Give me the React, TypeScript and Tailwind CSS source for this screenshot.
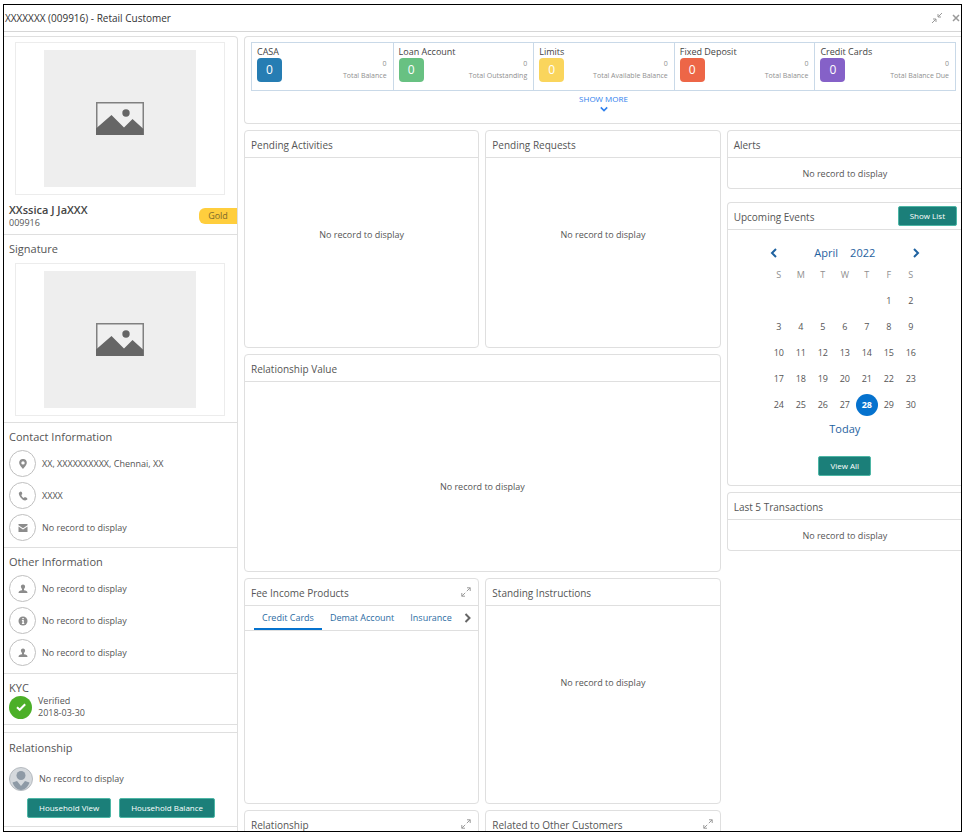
import { useState, type ReactNode } from 'react';

const products = [
  { label: 'CASA', caption: 'Total Balance', color: 'bg-[#267db3]' },
  { label: 'Loan Account', caption: 'Total Outstanding', color: 'bg-[#68c182]' },
  { label: 'Limits', caption: 'Total Available Balance', color: 'bg-[#fad55c]' },
  { label: 'Fixed Deposit', caption: 'Total Balance', color: 'bg-[#ed6647]' },
  { label: 'Credit Cards', caption: 'Total Balance Due', color: 'bg-[#8561c8]' },
];

const weeks = [
  [null, null, null, null, null, 1, 2],
  [3, 4, 5, 6, 7, 8, 9],
  [10, 11, 12, 13, 14, 15, 16],
  [17, 18, 19, 20, 21, 22, 23],
  [24, 25, 26, 27, 28, 29, 30],
];

const feeTabs = ['Credit Cards', 'Demat Account', 'Insurance'];

const PinIcon = () => (
  <svg className="w-3 h-3" viewBox="0 0 12 12" fill="#8c8c8c">
    <path fillRule="evenodd" d="M6 1a3.8 3.8 0 0 0-3.8 3.8C2.2 7.2 6 11 6 11s3.8-3.8 3.8-6.200A3.8 3.8 0 0 0 6 1zm0 2.200a1.700 1.700 0 1 1 0 3.400 1.700 1.700 0 0 1 0-3.400z" />
  </svg>
);

const PhoneIcon = () => (
  <svg className="w-3 h-3" viewBox="0 0 12 12" fill="#8c8c8c">
    <path d="M3.5 1.5 1.9 2.7c-.6 2 2.5 7.2 6.3 7.9l2.2-1-.3-1.500-2.200-1-1.200.9C5.500 7.400 4.500 6 4.300 5l1-.9-.5-2.200z" />
  </svg>
);

const MailIcon = () => (
  <svg className="w-3 h-3" viewBox="0 0 12 12" fill="#8c8c8c">
    <path d="M1.5 2h9v1.200L6 6.300 1.500 3.200z" />
    <path d="M1.5 4.400 6 7.500l4.500-3.100V10h-9z" />
  </svg>
);

const PersonIcon = () => (
  <svg className="w-3 h-3" viewBox="0 0 12 12" fill="#8c8c8c">
    <path d="M6 1.500c-1.500 0-2.200 1-2.100 2.300.1 1 .6 1.700 1.100 2.200v1.300C3 7.700 1.500 8.300 1.500 10h9c0-1.700-1.500-2.300-3.500-2.700V6c.5-.5 1-1.200 1.100-2.200C8.200 2.500 7.500 1.500 6 1.500z" />
  </svg>
);

const InfoIcon = () => (
  <svg className="w-3 h-3" viewBox="0 0 12 12">
    <circle cx="6" cy="6" r="4.5" fill="#8c8c8c" />
    <path d="M5.300 2.900h1.500v1.300H5.300zM4.900 5h1.900v3.100h.5v.9H4.900v-.9h.5V5.900h-.5z" fill="#fff" />
  </svg>
);

const ExpandIcon = () => (
  <svg className="w-2.5 h-2.5" viewBox="0 0 10 10" fill="none" stroke="#9a9a9a">
    <path d="M6 .8h3.200V4M9.200.8 5.800 4.200M4 9.200H.8V6M.8 9.200l3.400-3.400" />
  </svg>
);

const CollapseIcon = () => (
  <svg className="w-3 h-3" viewBox="0 0 12 12" fill="none" stroke="#999">
    <path d="M7 2v3h3M7 5l4-4M2 7h3v3M5 7l-4 4" />
  </svg>
);

const Chevron = ({ className, d }: { className: string; d: string }) => (
  <svg className={className} viewBox="0 0 10 10" fill="none" stroke="currentColor" strokeWidth="2">
    <path d={d} />
  </svg>
);

const Placeholder = ({ label }: { label: string }) => (
  <div className="ml-[11px] mr-3 py-[7px] border border-[#ececec] flex justify-center">
    <div className="w-[152px] h-[137px] bg-[#eee] flex items-center justify-center">
      <svg role="img" aria-label={label} className="w-12 h-[33px]" viewBox="0 0 48 33">
        <rect x="0.75" y="0.75" width="46.5" height="31.5" fill="#f0f0f0" stroke="#808080" strokeWidth="1.5" />
        <path d="M0 26.5 15.5 13 28 25.5 36.5 17 47.5 27V33H0z" fill="#666" />
        <circle cx="30" cy="11" r="3.7" fill="#666" />
      </svg>
    </div>
  </div>
);

const TealButton = ({ children }: { children: ReactNode }) => (
  <button className="h-5 px-[11px] rounded-xs border border-[#4db6a5] bg-[#1b7f79] text-white text-[8px] leading-3 whitespace-nowrap">
    {children}
  </button>
);

const InfoRow = ({ icon, text }: { icon: ReactNode; text: string }) => (
  <li className="flex items-center gap-1.5">
    <span className="w-[27px] h-[27px] shrink-0 rounded-full border border-[#bfbfbf] flex items-center justify-center">
      {icon}
    </span>
    <span>{text}</span>
  </li>
);

type CardProps = {
  title: string;
  action?: ReactNode;
  className?: string;
  children?: ReactNode;
};

const Card = ({ title, action, className = 'rounded-sm border', children }: CardProps) => (
  <section className={`flex flex-col border-[#dfdfdf] ${className}`}>
    <div className="h-[27px] shrink-0 pl-1.5 pr-[5px] border-b border-[#dfdfdf] flex items-center justify-between">
      <h2 className="pt-0.5 text-[10px] leading-[14px]">{title}</h2>
      {action}
    </div>
    {children}
  </section>
);

const Empty = ({ className = 'grow pt-0.5' }: { className?: string }) => (
  <p className={`flex items-center justify-center ${className}`}>No record to display</p>
);

const ExpandButton = ({ label }: { label: string }) => (
  <button aria-label={label} className="px-0.5">
    <ExpandIcon />
  </button>
);

const App = () => {
  const [feeTab, setFeeTab] = useState('Credit Cards');
  const [selectedDay, setSelectedDay] = useState(28);

  return (
    <div className="h-screen pt-1 px-[3px] pb-[3px] bg-white font-['Open_Sans','Noto_Sans',sans-serif] text-[9px] leading-3 text-[#555]">
      <div className="h-full border border-black overflow-hidden flex flex-col">
        {/* Title bar */}
        <header className="h-[27px] shrink-0 pl-px border-b border-[#d6d6d6] flex items-center justify-between">
          <h1 className="text-[10px] leading-[14px] text-[#333]">XXXXXXX (009916) - Retail Customer</h1>
          <div className="flex items-center gap-2">
            <button aria-label="Collapse"><CollapseIcon /></button>
            <button aria-label="Close">
              <svg className="w-2.5 h-2.5" viewBox="0 0 10 10" stroke="#999" strokeWidth="1.5">
                <path d="M2 2l6 6M8 2 2 8" />
              </svg>
            </button>
          </div>
        </header>

        <div className="grow min-h-0 pt-1 flex gap-1.5">
          {/* Customer panel */}
          <aside className="w-[234px] shrink-0 border-t border-r border-[#dfdfdf] rounded-tr-sm">
            <section className="pt-[5px] pb-[5px] border-b border-[#dfdfdf]">
              <Placeholder label="Customer photo" />
              <div className="pt-2 pl-[5px] flex items-center justify-between">
                <div>
                  <p className="text-[11px] leading-[14px] font-semibold text-[#444]">XXssica J JaXXX</p>
                  <p>009916</p>
                </div>
                <span className="w-[38px] h-4 rounded-l-md bg-[#ffce3d] text-[#7d6a2c] flex items-center justify-center">
                  Gold
                </span>
              </div>
            </section>

            <section className="pt-[7px] pb-1.5 border-b border-[#dfdfdf]">
              <h2 className="pl-[5px] mb-[7px] text-[11px] leading-[14px]">Signature</h2>
              <Placeholder label="Signature" />
            </section>

            <section className="pt-[7px] pb-1.5 px-[5px] border-b border-[#dfdfdf]">
              <h2 className="mb-1.5 text-[11px] leading-[14px]">Contact Information</h2>
              <ul className="flex flex-col gap-[5px]">
                <InfoRow icon={<PinIcon />} text="XX, XXXXXXXXXX, Chennai, XX" />
                <InfoRow icon={<PhoneIcon />} text="XXXX" />
                <InfoRow icon={<MailIcon />} text="No record to display" />
              </ul>
            </section>

            <section className="pt-[7px] pb-[7px] px-[5px] border-b border-[#dfdfdf]">
              <h2 className="mb-1.5 text-[11px] leading-[14px]">Other Information</h2>
              <ul className="flex flex-col gap-[5px]">
                <InfoRow icon={<PersonIcon />} text="No record to display" />
                <InfoRow icon={<InfoIcon />} text="No record to display" />
                <InfoRow icon={<PersonIcon />} text="No record to display" />
              </ul>
            </section>

            <section className="pt-[7px] pb-[5px] px-[5px] border-b border-[#dfdfdf]">
              <h2 className="text-[11px] leading-[14px]">KYC</h2>
              <div className="flex items-center gap-1.5">
                <span className="w-[23px] h-[23px] rounded-full bg-[#4caf28] flex items-center justify-center">
                  <svg className="w-3 h-3" viewBox="0 0 12 12" fill="none" stroke="#fff" strokeWidth="2">
                    <path d="M2 6.200 4.700 8.800 10.200 3.200" />
                  </svg>
                </span>
                <div>
                  <p>Verified</p>
                  <p>2018-03-30</p>
                </div>
              </div>
            </section>

            <section className="mt-[7px] pt-2 pb-2 px-[5px] border-y border-[#dfdfdf]">
              <h2 className="mb-3 text-[11px] leading-[14px]">Relationship</h2>
              <div className="mb-[7px] flex items-center gap-1.5">
                <svg className="w-6 h-6" viewBox="0 0 24 24">
                  <circle cx="12" cy="12" r="11.5" fill="#d5d9dd" stroke="#b5babf" />
                  <circle cx="12" cy="8.5" r="4.5" fill="#8e9aa6" />
                  <path d="M3.500 15.500 8 14l4 5 4-5 4.500 1.500c-1 3-4 7.500-8.500 7.500s-7.500-4.500-8.500-7.500z" fill="#8e9aa6" />
                </svg>
                <span>No record to display</span>
              </div>
              <div className="pl-[18px] flex gap-2">
                <TealButton>Household View</TealButton>
                <TealButton>Household Balance</TealButton>
              </div>
            </section>
          </aside>

          {/* Dashboard */}
          <main className="grow min-w-0 -mr-px flex flex-col gap-1.5">
            <section className="h-[88px] shrink-0 pt-[5px] px-1.5 border border-r-0 border-[#dfdfdf] rounded-l-sm">
              <ul className="grid grid-cols-5 border border-[#c9d9e8]">
                {products.map((p, i) => (
                  <li
                    key={p.label}
                    className={`h-[47px] pt-[3px] pl-[5px] pr-1.5 ${i > 0 ? 'border-l border-[#c9d9e8]' : ''}`}
                  >
                    <p className="text-[#444]">{p.label}</p>
                    <div className="flex items-center justify-between">
                      <span className={`w-[25px] h-6 rounded-sm ${p.color} text-white text-xs flex items-center justify-center`}>
                        0
                      </span>
                      <div className="text-right text-[7px] leading-3 text-[#8f8f8f]">
                        <p>0</p>
                        <p>{p.caption}</p>
                      </div>
                    </div>
                  </li>
                ))}
              </ul>
              <button className="mx-auto pt-0.5 flex flex-col items-center text-[8px] leading-3 text-[#2f80ed]">
                SHOW MORE
                <Chevron className="w-2 h-2" d="M1 3l4 4 4-4" />
              </button>
            </section>

            <div className="grid grid-cols-3 items-start gap-1.5">
              <div className="col-span-2 grid grid-cols-2 gap-1.5">
                <Card title="Pending Activities" className="h-[218px] rounded-sm border">
                  <Empty className="h-[154px]" />
                </Card>
                <Card title="Pending Requests" className="h-[218px] rounded-sm border">
                  <Empty className="h-[154px]" />
                </Card>
                <Card title="Relationship Value" className="col-span-2 h-[218px] rounded-sm border">
                  <Empty className="grow pt-5" />
                </Card>
                <Card
                  title="Fee Income Products"
                  action={<ExpandButton label="Expand fee income products" />}
                  className="h-[226px] rounded-sm border"
                >
                  <div className="h-[25px] pl-[9px] pr-[5px] border-b border-[#dfdfdf] flex justify-between">
                    <div role="tablist" className="flex">
                      {feeTabs.map((tab) => (
                        <button
                          key={tab}
                          role="tab"
                          aria-selected={feeTab === tab}
                          onClick={() => setFeeTab(tab)}
                          className={`px-2 pt-0.5 whitespace-nowrap border-b-2 text-[#2b6ca3] ${
                            feeTab === tab ? 'border-[#0572ce]' : 'border-transparent'
                          }`}
                        >
                          {tab}
                        </button>
                      ))}
                    </div>
                    <button aria-label="Next tabs" className="text-[#666]">
                      <Chevron className="w-2.5 h-2.5" d="M2.5 1l4 4-4 4" />
                    </button>
                  </div>
                </Card>
                <Card title="Standing Instructions" className="h-[226px] rounded-sm border">
                  <Empty className="h-[154px]" />
                </Card>
                <Card title="Relationship" action={<ExpandButton label="Expand relationship" />} />
                <Card title="Related to Other Customers" action={<ExpandButton label="Expand related customers" />} />
              </div>

              <div className="flex flex-col gap-1.5">
                <Card title="Alerts" className="h-[59px] mb-[7px] rounded-l-sm border border-r-0">
                  <Empty />
                </Card>

                <Card
                  title="Upcoming Events"
                  action={<TealButton>Show List</TealButton>}
                  className="rounded-l-sm border border-r-0"
                >
                  <div className="pt-3.5 pb-[9px] flex flex-col items-center">
                    <div className="w-[154px] px-px h-[18px] flex items-center justify-between text-[11px] text-[#1f62a0]">
                      <button aria-label="Previous month">
                        <Chevron className="w-2.5 h-2.5" d="M7 1 3 5l4 4" />
                      </button>
                      <div className="flex gap-3">
                        <button>April</button>
                        <button>2022</button>
                      </div>
                      <button aria-label="Next month">
                        <Chevron className="w-2.5 h-2.5" d="M3 1l4 4-4 4" />
                      </button>
                    </div>
                    <table className="w-[154px] table-fixed text-center">
                      <thead>
                        <tr className="h-[26px] text-[#8f8f8f]">
                          {['S', 'M', 'T', 'W', 'T', 'F', 'S'].map((d, i) => (
                            <th key={i} scope="col" className="font-normal">{d}</th>
                          ))}
                        </tr>
                      </thead>
                      <tbody>
                        {weeks.map((week, i) => (
                          <tr key={i} className="h-[26px]">
                            {week.map((day, j) => (
                              <td key={j} className="p-0">
                                {day && (
                                  <button
                                    onClick={() => setSelectedDay(day)}
                                    className={`w-[22px] h-[22px] rounded-full align-middle ${
                                      day === selectedDay ? 'bg-[#0572ce] text-white font-bold' : ''
                                    }`}
                                  >
                                    {day}
                                  </button>
                                )}
                              </td>
                            ))}
                          </tr>
                        ))}
                      </tbody>
                    </table>
                    <button className="h-[22px] mb-4 text-[11px] text-[#1f62a0]">Today</button>
                    <TealButton>View All</TealButton>
                  </div>
                </Card>

                <Card title="Last 5 Transactions" className="h-[59px] rounded-l-sm border border-r-0">
                  <Empty />
                </Card>
              </div>
            </div>
          </main>
        </div>
      </div>
    </div>
  );
};

export default App;
